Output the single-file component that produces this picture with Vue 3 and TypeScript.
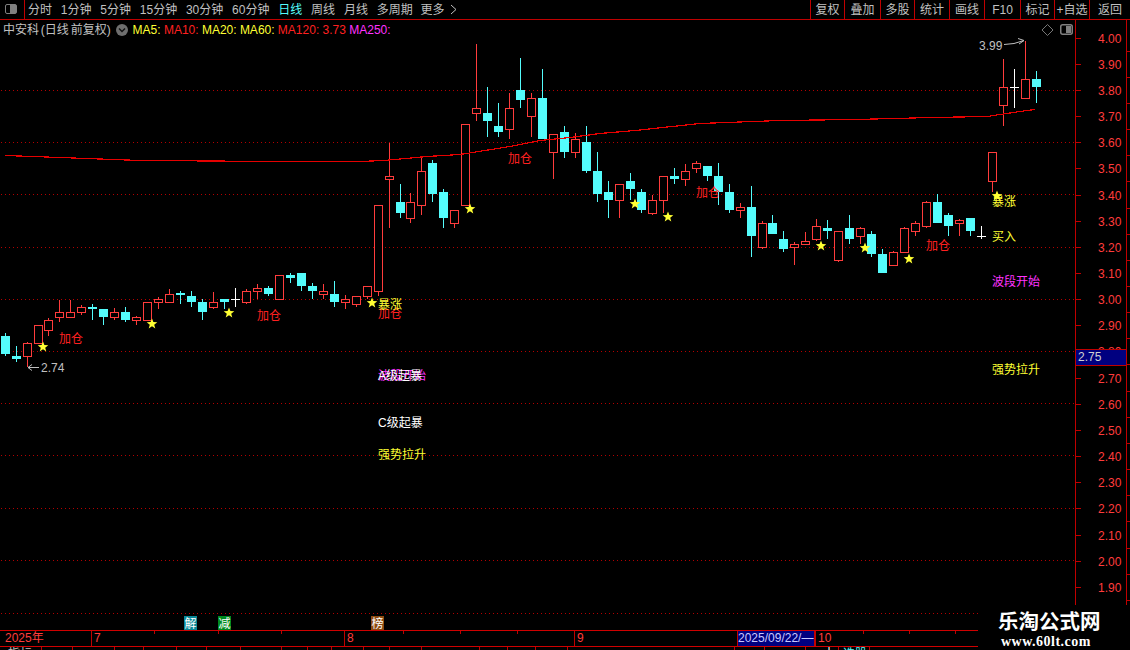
<script setup lang="ts">
type Kind = 'r' | 'c' | 'w'
type Candle = [number, number, number, number, number, Kind]

const candles: Candle[] = [
  [5,333,336,354,356,'c'],[16,346,356,359,362,'c'],[27,342,343,357,367,'r'],[38,325,325,344,344,'r'],
  [48,318,320,331,336,'r'],[59,300,312,318,322,'r'],[70,300,312,318,318,'r'],[81,305,307,313,315,'r'],
  [92,304,307,309,320,'c'],[103,309,309,317,325,'c'],[114,308,312,318,320,'r'],[125,307,312,320,322,'c'],
  [136,316,317,321,325,'r'],[147,302,302,321,321,'r'],[158,297,299,303,309,'r'],[169,289,294,303,303,'r'],
  [180,291,293,295,304,'c'],[191,291,296,302,307,'c'],[202,299,302,312,320,'c'],[213,292,302,308,309,'r'],
  [224,299,299,302,309,'c'],[235,288,299,299,307,'w'],[246,289,291,303,304,'r'],[257,284,288,292,299,'r'],
  [268,286,288,294,296,'c'],[279,275,275,300,300,'r'],[290,273,275,278,283,'c'],[301,273,273,286,291,'c'],
  [312,283,286,291,299,'c'],[323,284,291,295,299,'r'],[334,281,294,302,307,'c'],[345,295,299,303,309,'r'],
  [356,296,296,305,307,'r'],[367,286,286,297,299,'r'],[378,205,205,292,296,'r'],[389,143,176,180,228,'r'],
  [400,184,202,213,218,'c'],[410,193,202,219,223,'r'],[421,156,171,206,215,'r'],[432,160,163,194,202,'c'],
  [443,189,192,218,228,'c'],[454,210,210,224,228,'r'],[465,124,124,206,206,'r'],[476,44,108,114,121,'r'],
  [487,87,113,121,137,'c'],[498,103,126,132,137,'c'],[509,93,108,130,139,'r'],[520,58,90,100,108,'c'],
  [531,93,98,117,137,'r'],[542,69,98,139,139,'c'],[553,134,134,153,179,'r'],[564,126,132,152,158,'c'],
  [575,133,139,153,158,'r'],[586,126,142,171,173,'c'],[597,152,171,194,202,'c'],[608,181,192,200,218,'c'],
  [619,184,184,201,218,'r'],[630,173,181,189,200,'c'],[641,189,192,210,213,'c'],[652,195,200,214,215,'r'],
  [663,176,176,201,213,'r'],[674,168,176,179,184,'c'],[685,164,171,180,186,'r'],[696,161,163,169,173,'r'],
  [707,166,166,176,181,'c'],[718,163,176,192,205,'c'],[729,184,192,210,213,'c'],[740,203,207,211,218,'r'],
  [751,186,207,236,257,'c'],[762,221,223,248,249,'r'],[772,215,223,234,234,'c'],[783,231,239,249,252,'c'],
  [794,242,244,248,265,'r'],[805,232,241,245,245,'r'],[816,219,226,240,241,'r'],[827,220,228,231,239,'c'],
  [838,231,231,261,262,'r'],[849,215,228,239,244,'c'],[860,227,228,237,244,'r'],[871,231,234,254,257,'c'],
  [882,249,254,273,273,'c'],[893,251,252,266,266,'r'],[904,227,228,253,253,'r'],[915,221,223,232,236,'r'],
  [926,201,202,227,228,'r'],[937,194,202,223,223,'c'],[948,213,215,226,236,'c'],[959,219,220,224,236,'r'],
  [970,218,218,231,236,'c'],[981,226,236,236,239,'w'],[992,152,152,182,192,'r'],[1003,59,87,106,126,'r'],
  [1014,69,87,87,108,'w'],[1025,41,79,99,99,'r'],[1036,71,79,87,103,'c'],
]

const maLine = '5,155.5 60,157.5 140,160.5 280,161.5 360,161.5 384,160.5 427,156.5 460,154.5 510,146.5 540,140.5 570,137.5 600,133.5 635,130.5 700,123.5 780,120.5 855,119.5 932,117.5 987,116.5 1000,114.5 1020,111.5 1035,109.5'

const starPoints = (cx: number, cy: number): string => {
  const pts: string[] = []
  for (let i = 0; i < 10; i++) {
    const r = i % 2 === 0 ? 5.6 : 2.3
    const a = -Math.PI / 2 + (i * Math.PI) / 5
    pts.push(`${(cx + r * Math.cos(a)).toFixed(1)},${(cy + r * Math.sin(a)).toFixed(1)}`)
  }
  return pts.join(' ')
}
const stars = [[43,347],[152,324],[229,313],[372,303],[470,209],[635,204],[668,217],[821,246],[865,248],[909,259],[997,196]].map(
  ([x, y]) => starPoints(x, y),
)

const grid = [90, 142, 194, 247, 299, 351, 403, 455, 508, 560, 613]
const axis = Array.from({ length: 22 }, (_, i) => ({
  label: (4 - i * 0.1).toFixed(2),
  y: Math.round(37.7 + 26.15 * i),
}))

const marks = [
  { t: '加仓', x: 59, y: 343, c: 'red' },
  { t: '加仓', x: 257, y: 320, c: 'red' },
  { t: '加仓', x: 378, y: 318, c: 'red' },
  { t: '暴涨', x: 378, y: 309, c: 'yellow' },
  { t: '加仓', x: 508, y: 163, c: 'red' },
  { t: '加仓', x: 696, y: 197, c: 'red' },
  { t: '加仓', x: 926, y: 250, c: 'red' },
  { t: '暴涨', x: 992, y: 206, c: 'yellow' },
  { t: '买入', x: 992, y: 241, c: 'yellow' },
  { t: '波段开始', x: 992, y: 286, c: 'magenta' },
  { t: '强势拉升', x: 992, y: 374, c: 'yellow' },
  { t: '波段开始', x: 378, y: 380, c: 'magenta' },
  { t: 'A级起暴', x: 378, y: 380, c: 'white' },
  { t: 'C级起暴', x: 378, y: 427, c: 'white' },
  { t: '强势拉升', x: 378, y: 459, c: 'yellow' },
]

const badges = [
  { t: '解', x: 184, c: 'teal' },
  { t: '减', x: 218, c: 'green' },
  { t: '榜', x: 371, c: 'brown' },
]

const periods = ['分时', '1分钟', '5分钟', '15分钟', '30分钟', '60分钟', '日线', '周线', '月线', '多周期']
const tools = ['复权', '叠加', '多股', '统计', '画线', 'F10', '标记', '+自选', '返回']
const minorTicks = [154, 218, 281, 403, 460, 517, 863, 909, 955]
const bottomTabs = [
  { w: 42, t: '指标', c: '' }, { w: 31, t: '', c: '' }, { w: 42, t: '', c: '' }, { w: 29, t: '', c: '' },
  { w: 33, t: '', c: '' }, { w: 30, t: '', c: '' }, { w: 34, t: '', c: '' }, { w: 41, t: '', c: '' },
  { w: 26, t: '', c: '' }, { w: 24, t: '', c: '' }, { w: 32, t: '', c: '' }, { w: 26, t: '', c: '' },
  { w: 32, t: '', c: '' }, { w: 58, t: '', c: '' }, { w: 28, t: '', c: '' }, { w: 28, t: '', c: '' },
  { w: 32, t: '', c: '' }, { w: 167, t: '', c: '' }, { w: 30, t: '', c: '' }, { w: 41, t: '', c: '' },
  { w: 33, t: '十', c: 'plus' }, { w: 31, t: '选股', c: 'pick' },
]
</script>

<template>
  <div class="screen">
    <header class="topbar">
      <div class="toggle"><span class="pane-icon"></span></div>
      <nav class="periods">
        <span v-for="p in periods" :key="p" :class="{ active: p === '日线' }">{{ p }}</span>
        <span class="more">更多<svg width="8" height="11" viewBox="0 0 8 11"><path d="M1 1l5 4.5L1 10" fill="none" stroke="#c0c0c0" /></svg></span>
      </nav>
      <nav class="tools">
        <span v-for="t in tools" :key="t">{{ t }}</span>
      </nav>
    </header>

    <main class="chart">
      <svg class="canvas" width="1130" height="610" viewBox="0 20 1130 610">
        <g shape-rendering="crispEdges">
          <line v-for="y in grid" :key="y" x1="1" :y1="y + 0.5" x2="1075" :y2="y + 0.5" class="dots" />
          <line x1="1075.5" y1="20" x2="1075.5" y2="630" class="axis" />
          <line x1="1126.5" y1="20" x2="1126.5" y2="630" class="axis" />
          <line v-for="a in axis" :key="a.label" x1="1075" :y1="a.y + 0.5" x2="1081" :y2="a.y + 0.5" class="axis" />
          <line v-for="a in axis" :key="'r' + a.label" x1="1127" :y1="a.y + 13.5" x2="1130" :y2="a.y + 13.5" class="axis" />
        </g>

        <text v-for="a in axis" :key="'l' + a.label" x="1098" :y="a.y + 4.5" class="label">{{ a.label }}</text>

        <g shape-rendering="crispEdges">
          <template v-for="k in candles" :key="k[0]">
            <template v-if="k[5] === 'r'">
              <line :x1="k[0] + 0.5" :y1="k[1]" :x2="k[0] + 0.5" :y2="k[2]" class="up" />
              <line :x1="k[0] + 0.5" :y1="k[3]" :x2="k[0] + 0.5" :y2="k[4]" class="up" />
              <rect :x="k[0] - 3.5" :y="k[2] + 0.5" width="8" :height="k[3] - k[2] - 1" class="up hollow" />
            </template>
            <template v-else-if="k[5] === 'c'">
              <line :x1="k[0] + 0.5" :y1="k[1]" :x2="k[0] + 0.5" :y2="k[4]" class="down" />
              <rect :x="k[0] - 4" :y="k[2]" width="9" :height="k[3] - k[2]" class="down-fill" />
            </template>
            <template v-else>
              <line :x1="k[0] + 0.5" :y1="k[1]" :x2="k[0] + 0.5" :y2="k[4]" class="flat" />
              <line :x1="k[0] - 4" :y1="k[2] + 0.5" :x2="k[0] + 5" :y2="k[2] + 0.5" class="flat" />
            </template>
          </template>
          <polyline :points="maLine" class="ma" />
        </g>

        <polygon v-for="(s, i) in stars" :key="i" :points="s" class="star" />

        <text v-for="m in marks" :key="m.t + m.x + m.y + m.c" :x="m.x" :y="m.y" class="mark" :class="m.c">{{ m.t }}</text>

        <path d="M39 367.5H28M32 364.5l-4 3 4 3" class="note" />
        <text x="41" y="372" class="note-text">2.74</text>
        <text x="979" y="50" class="note-text">3.99</text>
        <path d="M1004 44.5l10-1 10-3M1018 38.5l6 2-5 3.5" class="note" />

        <path d="M1047.5 24.5l5.5 5.5-5.5 5.5-5.5-5.5z" class="diamond" />
        <rect x="1060.75" y="24.75" width="11.5" height="9.5" rx="2" class="pane" />
        <rect x="1066" y="26" width="5" height="7" class="pane-fill" />

        <g v-for="b in badges" :key="b.t">
          <rect :x="b.x" y="616" width="13" height="14" :class="b.c" />
          <text :x="b.x + 0.5" y="627.5" class="badge">{{ b.t }}</text>
        </g>
      </svg>

      <div class="info">
        <span class="name">中安科 (日线 前复权)</span>
        <span class="chevron"><svg width="12" height="12" viewBox="0 0 12 12"><circle cx="6" cy="6" r="6" fill="#6e6e6e" /><path d="M3 4.5l3 3 3-3" fill="none" stroke="#111" stroke-width="1.4" /></svg></span>
        <span class="c-yellow">MA5:</span>
        <span class="c-red">MA10:</span>
        <span class="c-yellow">MA20:</span>
        <span class="c-yellow">MA60:</span>
        <span class="c-red">MA120: 3.73</span>
        <span class="c-magenta">MA250:</span>
      </div>

      <div class="last-price">2.75</div>
    </main>

    <footer class="timeline">
      <span class="year">2025年</span>
      <span class="month m7">7</span>
      <span class="month m8">8</span>
      <span class="month m9">9</span>
      <span class="date">2025/09/22/—</span>
      <span class="month m10">10</span>
      <i v-for="t in minorTicks" :key="t" class="tick" :style="{ left: t + 'px' }"></i>
    </footer>
    <div class="tabs">
      <span v-for="(t, i) in bottomTabs" :key="i" :class="t.c" :style="{ width: t.w + 'px' }">{{ t.t }}</span>
    </div>

    <aside class="brand">
      <strong>乐淘公式网</strong>
      <em>www.60lt.com</em>
    </aside>
  </div>
</template>

<style>
html, body { margin: 0; background: #000; overflow: hidden; }
</style>

<style scoped>
.screen {
  position: relative;
  width: 1130px;
  height: 650px;
  overflow: hidden;
  display: flex;
  flex-direction: column;
  background: #000;
  color: #c0c0c0;
  font: 12px/1 "Liberation Sans", "Noto Sans CJK SC", sans-serif;
}
.topbar {
  flex: 0 0 20px;
  box-sizing: border-box;
  height: 20px;
  display: flex;
  border-bottom: 1px solid #c00000;
}
.toggle {
  box-sizing: border-box;
  width: 25px;
  border-right: 1px solid #c00000;
  padding: 4px 0 0 5px;
}
.pane-icon {
  display: block;
  box-sizing: border-box;
  width: 12px;
  height: 10px;
  border: 1.5px solid #808080;
  border-radius: 2px;
  background: linear-gradient(90deg, #000 45%, #808080 45%);
}
.periods {
  display: flex;
  align-items: center;
  gap: 8.8px;
  padding-left: 3px;
}
.periods .active { color: #54fcfc; }
.more { display: flex; align-items: center; gap: 5px; margin-left: -1px; }
.tools {
  margin-left: auto;
  display: grid;
  grid-template-columns: 34px 36px 34px 35px 35px 36px 34px 35px 41px;
}
.tools span {
  box-sizing: border-box;
  border-left: 1px solid #c00000;
  display: flex;
  align-items: center;
  justify-content: center;
}
.chart {
  position: relative;
  flex: 0 0 610px;
}
.canvas { display: block; }
.dots { stroke: #b40000; stroke-dasharray: 1 3; }
.axis { stroke: #c00000; }
.label { fill: #ff3c3c; font-size: 12px; }
.up { stroke: #ff3c3c; }
.hollow { fill: #000; }
.down { stroke: #54fcfc; }
.down-fill { fill: #54fcfc; }
.flat { stroke: #fff; }
.ma { fill: none; stroke: #e60000; stroke-width: 1.2; }
.star { fill: #ffff33; }
.mark { font-size: 12px; }
.mark.red { fill: #ff2020; }
.mark.yellow { fill: #ffff33; }
.mark.magenta { fill: #ff33ff; }
.mark.white { fill: #fff; }
.note { fill: none; stroke: #c0c0c0; }
.note-text { fill: #c0c0c0; font-size: 12px; }
.diamond { fill: none; stroke: #777; }
.pane { fill: #000; stroke: #808080; stroke-width: 1.5; }
.pane-fill { fill: #808080; }
.teal { fill: #0a8796; }
.green { fill: #008a1e; }
.brown { fill: #8c4a10; }
.badge { fill: #fff; font-size: 12px; }
.info {
  position: absolute;
  left: 3px;
  top: 3px;
  display: flex;
  align-items: center;
  gap: 3.3px;
  height: 13px;
}
.name { width: 109px; white-space: nowrap; word-spacing: -1.5px; }
.chevron { display: flex; margin: 0 1px 0 1px; }
.c-yellow { color: #ffff33; }
.c-red { color: #ff2020; }
.c-magenta { color: #ff33ff; }
.last-price {
  position: absolute;
  left: 1075px;
  top: 329px;
  box-sizing: border-box;
  width: 52px;
  height: 17px;
  padding-left: 2px;
  border: 1px solid #c00000;
  background: #000080;
  color: #d0d0d0;
  line-height: 15px;
}
.timeline {
  position: relative;
  flex: 0 0 17px;
  box-sizing: border-box;
  display: grid;
  grid-template-columns: 91px 253px 230px 163px 78px 1fr;
  border-top: 1px solid #d00000;
  border-bottom: 1px solid #d00000;
  color: #ff3c3c;
  line-height: 15px;
}
.year { padding-left: 5px; }
.month { border-left: 1px solid #c00000; padding-left: 2px; }
.date {
  box-sizing: border-box;
  border: 1px solid #c00000;
  border-width: 0 1px;
  background: #000080;
  color: #c8c8ff;
  white-space: nowrap;
  overflow: hidden;
}
.tick {
  position: absolute;
  top: 0;
  width: 1px;
  height: 3px;
  background: #c00000;
}
.tabs { display: flex; flex: 1; overflow: hidden; }
.tabs span {
  box-sizing: border-box;
  border-right: 1px solid #c00000;
  height: 16px;
  padding: 1px 0 0 8px;
}
.tabs .plus { padding-left: 17px; color: #fff; }
.tabs .pick { padding-left: 4px; color: #54fcfc; white-space: nowrap; }
.brand {
  position: absolute;
  left: 978px;
  top: 605px;
  width: 152px;
  height: 45px;
  background: #000;
  color: #fff;
  display: flex;
  flex-direction: column;
  align-items: flex-start;
  padding-left: 20px;
  box-sizing: border-box;
}
.brand strong {
  font: 700 20.5px/24px "Noto Sans CJK SC", sans-serif;
  margin-top: 3px;
}
.brand em {
  font: 700 14px/14px "Liberation Serif", serif;
  letter-spacing: 0.5px;
  margin: 3px 0 0 3px;
}
</style>
